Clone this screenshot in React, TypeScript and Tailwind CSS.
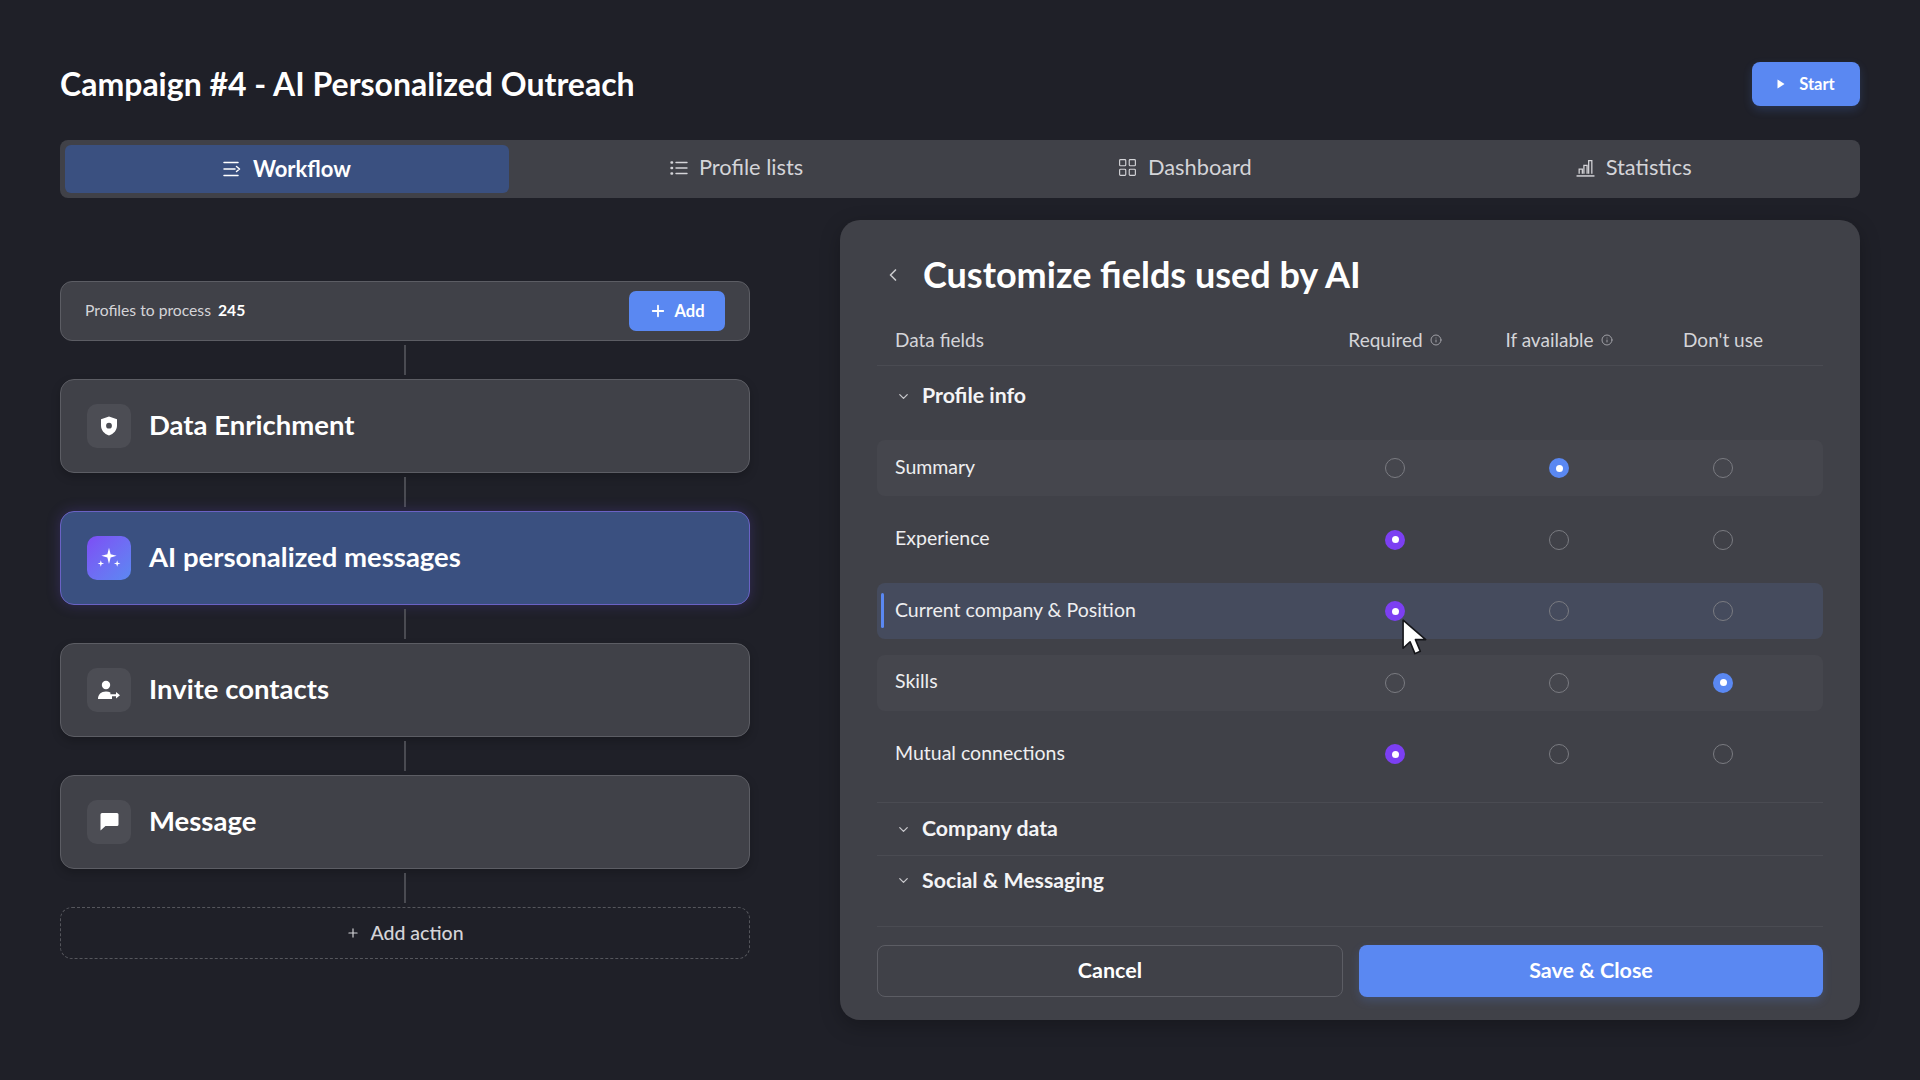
import { ChevronDown, ChevronLeft, Info, LayoutGrid, Plus } from "lucide-react";
import type { ReactNode } from "react";

const WorkflowIcon = () => (
  <svg width="18" height="16" viewBox="0 0 18 16" fill="none" stroke="currentColor" strokeWidth="1.5" strokeLinecap="round" strokeLinejoin="round">
    <path d="M1 1.500h14M1 8h11M1 14.500h14M13.500 5.500 16.500 8l-3 2.500" />
  </svg>
);

const ListIcon = () => (
  <svg width="18" height="16" viewBox="0 0 18 16" fill="none" stroke="currentColor" strokeWidth="1.4" strokeLinecap="round">
    <path d="M6 2.500h11M6 8h11M6 13.500h11" />
    <path d="M1.500 2.500h.6M1.500 8h.6M1.500 13.500h.6" strokeWidth="2.4" />
  </svg>
);

const StatsIcon = () => (
  <svg width="19" height="19" viewBox="0 0 18 18" fill="none" stroke="currentColor" strokeWidth="1.2">
    <path d="M0.500 17h17" strokeWidth="1.4" />
    <path d="M3 15V10.500h3V15M7.500 15V7h3v8M12 15V2.500h3V15" />
  </svg>
);

const ShieldIcon = () => (
  <svg width="18" height="20" viewBox="0 0 18 20">
    <path
      fillRule="evenodd"
      fill="#fff"
      d="M9 .5 17 3.200v6.300c0 4.800-3.200 8.300-8 10-4.800-1.700-8-5.200-8-10V3.200L9 .5Zm0 6.300a2.900 2.900 0 1 0 0 5.800 2.900 2.900 0 0 0 0-5.800Z"
    />
  </svg>
);

const SparkIcon = () => (
  <svg width="24" height="24" viewBox="0 0 22 22" fill="#fff">
    <path d="M11 1.500 12.500 7.500 18 9 12.500 10.500 11 16.500 9.500 10.500 4 9 9.500 7.500Z" />
    <path d="M3.500 13 4.200 15.300 6.500 16 4.200 16.700 3.500 19 2.800 16.700 0.500 16 2.800 15.300Z" />
    <path d="M18.500 13 19.200 15.300 21.500 16 19.200 16.700 18.500 19 17.800 16.700 15.500 16 17.800 15.300Z" />
  </svg>
);

const InviteIcon = () => (
  <svg width="22" height="20" viewBox="0 0 22 20" fill="#fff">
    <circle cx="8" cy="5" r="4.200" />
    <path d="M0 19c0-4.500 3-7.500 8-7.500 1.700 0 3.200.4 4.400 1v2.500h1.600V19H0Z" />
    <path d="M12 14.300h6V12l4 3.300-4 3.300v-2.300h-6z" />
  </svg>
);

const MessageIcon = () => (
  <svg width="20" height="20" viewBox="0 0 20 20" fill="#fff">
    <path d="M3 1h15a1.500 1.500 0 0 1 1.500 1.500v10a1.500 1.500 0 0 1-1.500 1.500H6.500L1.500 18.500V2.500A1.500 1.500 0 0 1 3 1Z" />
  </svg>
);

const Connector = () => <div className="mx-auto my-[4px] h-[30px] w-[2px] bg-[#4a4b52]" />;

function StepCard({ icon, label, active }: { icon: ReactNode; label: string; active?: boolean }) {
  return (
    <div
      className={
        active
          ? "flex h-[94px] items-center gap-[18px] rounded-[14px] border border-[#6a62c4] bg-[#3a5080] pl-[26px] shadow-[0_0_14px_rgba(110,80,230,0.25)]"
          : "flex h-[94px] items-center gap-[18px] rounded-[14px] border border-[#5c5d64] bg-[#404148] pl-[26px] shadow-[0_4px_10px_rgba(0,0,0,0.2)]"
      }
    >
      <div
        className={
          active
            ? "flex h-[44px] w-[44px] items-center justify-center rounded-[10px] bg-gradient-to-br from-[#7c4cf5] to-[#5a88f2]"
            : "flex h-[44px] w-[44px] items-center justify-center rounded-[10px] bg-[#4c4d54]"
        }
      >
        {icon}
      </div>
      <span className="pb-[2px] text-[27.500px] font-bold text-white">{label}</span>
    </div>
  );
}

function Radio({ state }: { state: "off" | "purple" | "blue" }) {
  if (state === "off") {
    return <span className="h-[20px] w-[20px] rounded-full border-[1.5px] border-[#7a7b81]" />;
  }
  return (
    <span
      className={
        state === "purple"
          ? "flex h-[20px] w-[20px] items-center justify-center rounded-full bg-[#7c3ff2]"
          : "flex h-[20px] w-[20px] items-center justify-center rounded-full bg-[#5a88f2]"
      }
    >
      <span className="h-[7px] w-[7px] rounded-full bg-white" />
    </span>
  );
}

type RowProps = {
  label: string;
  choice: 0 | 1 | 2;
  tone: "purple" | "blue";
  bg?: "plain" | "shaded" | "hover";
};

function FieldRow({ label, choice, tone, bg = "plain" }: RowProps) {
  const bgClass =
    bg === "hover" ? "bg-[#454b5d]" : bg === "shaded" ? "bg-[#45464d]" : "";
  return (
    <div className={`relative flex h-[56px] items-center rounded-[8px] pl-[18px] ${bgClass}`}>
      {bg === "hover" && <div className="absolute left-[4px] top-[10px] h-[35px] w-[3px] rounded-full bg-[#5a88f2]" />}
      <span className="flex-1 pb-[3px] text-[19.500px] text-[#eeeef0]">{label}</span>
      <div className="grid grid-cols-[164px_164px_164px] justify-items-center pr-[18px]">
        {[0, 1, 2].map((i) => (
          <Radio key={i} state={i === choice ? tone : "off"} />
        ))}
      </div>
    </div>
  );
}

function GroupHead({ label }: { label: string }) {
  return (
    <div className="flex items-center gap-[11px] pl-[19px]">
      <ChevronDown size={15} className="text-[#c9c9cd]" />
      <span className="text-[21.300px] font-bold text-[#f4f4f6]">{label}</span>
    </div>
  );
}

export default function App() {
  return (
    <div className="h-[1080px] w-[1920px] overflow-hidden bg-[#1f2028] px-[60px] pt-[62px] font-['Lato',sans-serif] text-white">
      {/* Header */}
      <div className="flex h-[44px] items-center justify-between">
        <h1 className="pb-[1px] text-[32px] font-bold">Campaign #4 - AI Personalized Outreach</h1>
        <button className="flex h-[44px] w-[108px] items-center justify-center gap-[14px] rounded-[8px] bg-[#5a88f2] text-[16.500px] font-bold shadow-[0_4px_10px_rgba(85,133,240,0.2)]">
          <svg width="8" height="10" viewBox="0 0 8 10" fill="#fff">
            <path d="M0.500 0.500 7.500 5 0.500 9.500Z" />
          </svg>
          Start
        </button>
      </div>

      {/* Tabs */}
      <div className="mt-[34px] grid h-[58px] grid-cols-4 gap-[5px] rounded-[8px] bg-[#404148] p-[5px]">
        <div className="flex items-center justify-center gap-[12px] rounded-[6px] bg-[#3a5080] pb-[1px] text-[22px] font-bold">
          <WorkflowIcon />
          Workflow
        </div>
        <div className="flex items-center justify-center gap-[11px] pb-[3px] pl-[2px] text-[21.800px] text-[#d4d4d8]">
          <ListIcon />
          Profile lists
        </div>
        <div className="flex items-center justify-center gap-[10px] pb-[3px] text-[21.800px] text-[#d4d4d8]">
          <LayoutGrid size={21} strokeWidth={1.3} />
          Dashboard
        </div>
        <div className="flex items-center justify-center gap-[11px] pb-[3px] pl-[1px] text-[21.800px] text-[#d4d4d8]">
          <StatsIcon />
          Statistics
        </div>
      </div>

      <div className="mt-[22px] flex gap-[90px]">
        {/* Workflow steps */}
        <div className="w-[690px] shrink-0 pt-[61px]">
          <div className="flex h-[60px] items-center justify-between rounded-[12px] border border-[#5c5d64] bg-[#404148] pl-[24px] pr-[24px]">
            <span className="pb-[1px] text-[15.700px] text-[#d4d4d8]">
              Profiles to process <span className="ml-[3px] font-bold text-white">245</span>
            </span>
            <button className="flex h-[40px] w-[96px] items-center justify-center gap-[7px] rounded-[7px] bg-[#5a88f2] text-[16.500px] font-bold">
              <Plus size={18} strokeWidth={2.4} />
              Add
            </button>
          </div>
          <Connector />
          <StepCard icon={<ShieldIcon />} label="Data Enrichment" />
          <Connector />
          <StepCard icon={<SparkIcon />} label="AI personalized messages" active />
          <Connector />
          <StepCard icon={<InviteIcon />} label="Invite contacts" />
          <Connector />
          <StepCard icon={<MessageIcon />} label="Message" />
          <Connector />
          <div className="flex h-[52px] items-center justify-center gap-[10px] rounded-[12px] border border-dashed border-[#55565c] pb-[1px] text-[19.500px] font-medium text-[#d4d4d8]">
            <Plus size={14} />
            Add action
          </div>
        </div>

        {/* Customize panel */}
        <div className="relative h-[800px] flex-1 rounded-[20px] bg-[#404148] pl-[37px] pr-[37px] shadow-[0_6px_20px_rgba(0,0,0,0.25)]">
          <div className="flex h-[110px] items-center gap-[20px] pl-[6px]">
            <ChevronLeft size={20} className="text-[#c9c9cd]" />
            <h2 className="pb-[3px] text-[36px] font-bold">Customize fields used by AI</h2>
          </div>
          <div className="flex h-[36px] items-start border-b border-[#4a4b52] pl-[18px] text-[19px] text-[#d4d4d8]">
            <span className="flex-1 leading-[20px]">Data fields</span>
            <div className="grid grid-cols-[164px_164px_164px] justify-items-center pr-[18px] leading-[20px]">
              <span className="flex items-center gap-[7px]">
                Required <Info size={12} className="text-[#a0a0a6]" />
              </span>
              <span className="flex items-center gap-[7px]">
                If available <Info size={12} className="text-[#a0a0a6]" />
              </span>
              <span>Don&apos;t use</span>
            </div>
          </div>
          <div className="flex h-[60px] items-center">
            <GroupHead label="Profile info" />
          </div>
          <div className="mt-[14px] flex flex-col gap-[15.500px]">
            <FieldRow label="Summary" choice={1} tone="blue" bg="shaded" />
            <FieldRow label="Experience" choice={0} tone="purple" />
            <FieldRow label="Current company & Position" choice={0} tone="purple" bg="hover" />
            <FieldRow label="Skills" choice={2} tone="blue" bg="shaded" />
            <FieldRow label="Mutual connections" choice={0} tone="purple" />
          </div>
          <div className="mt-[20px] flex h-[53px] items-center border-t border-[#4a4b52]">
            <GroupHead label="Company data" />
          </div>
          <div className="flex h-[71px] items-start border-t border-[#4a4b52] pt-[9px]">
            <GroupHead label="Social & Messaging" />
          </div>
          <div className="flex gap-[16px] border-t border-[#4a4b52] pt-[18px]">
            <button className="h-[52px] flex-1 rounded-[8px] border border-[#5c5d64] pb-[2px] text-[21.500px] font-bold">Cancel</button>
            <button className="h-[52px] flex-1 rounded-[8px] bg-[#5a88f2] pb-[2px] text-[21.500px] font-bold shadow-[0_4px_10px_rgba(85,133,240,0.2)]">
              Save &amp; Close
            </button>
          </div>

          {/* Mouse pointer */}
          <svg className="absolute left-[562px] top-[399px]" width="28" height="38" viewBox="0 0 26 35">
            <path
              d="M1 1v26l6.500-6 4.500 11 5-2.200-4.500-10.800H22Z"
              fill="#fff"
              stroke="#15161a"
              strokeWidth="1.500"
              strokeLinejoin="round"
            />
          </svg>
        </div>
      </div>
    </div>
  );
}
